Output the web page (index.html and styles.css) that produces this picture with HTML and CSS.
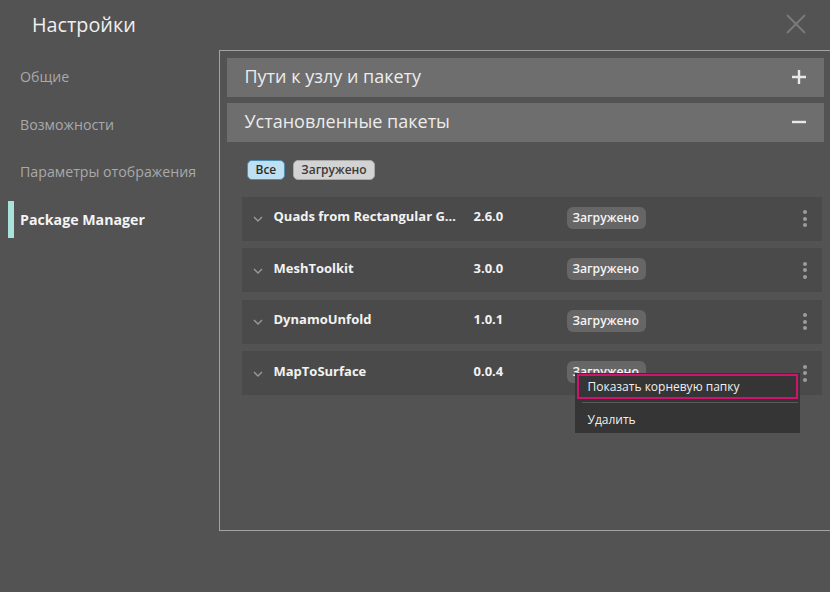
FILE: index.html
```html
<!DOCTYPE html>
<html lang="ru">
<head>
<meta charset="utf-8">
<title>Настройки</title>
<link rel="stylesheet" href="styles.css">
</head>
<body>
<div class="window">
  <header class="topbar">
    <h1 class="title">Настройки</h1>
    <svg class="close" width="20" height="20" viewBox="0 0 20 20"><path d="M1 1 L19 19 M19 1 L1 19" stroke="#7a7a7a" stroke-width="2" fill="none"/></svg>
  </header>
  <div class="body">
    <nav class="sidebar">
      <div class="nav-item">Общие</div>
      <div class="nav-item">Возможности</div>
      <div class="nav-item">Параметры отображения</div>
      <div class="nav-item active">Package Manager</div>
    </nav>
    <main class="panel">
      <div class="acc-header">
        <span>Пути к узлу и пакету</span>
        <svg width="16" height="16" viewBox="0 0 16 16"><path d="M8 1 V15 M1 8 H15" stroke="#e8e8e8" stroke-width="2.4"/></svg>
      </div>
      <div class="acc-header">
        <span>Установленные пакеты</span>
        <svg width="16" height="16" viewBox="0 0 16 16"><path d="M1 8 H15" stroke="#e8e8e8" stroke-width="2.4"/></svg>
      </div>
      <div class="chips">
        <span class="chip chip-active">Все</span>
        <span class="chip">Загружено</span>
      </div>
      <div class="list">
        <div class="row">
          <svg class="chev" width="10" height="6" viewBox="0 0 10 6"><path d="M1 1 L5 5 L9 1" stroke="#9a9a9a" stroke-width="1.4" fill="none"/></svg>
          <span class="name">Quads from Rectangular Grid</span>
          <span class="ver">2.6.0</span>
          <span class="badge">Загружено</span>
          <span class="kebab"><i></i><i></i><i></i></span>
        </div>
        <div class="row">
          <svg class="chev" width="10" height="6" viewBox="0 0 10 6"><path d="M1 1 L5 5 L9 1" stroke="#9a9a9a" stroke-width="1.4" fill="none"/></svg>
          <span class="name">MeshToolkit</span>
          <span class="ver">3.0.0</span>
          <span class="badge">Загружено</span>
          <span class="kebab"><i></i><i></i><i></i></span>
        </div>
        <div class="row">
          <svg class="chev" width="10" height="6" viewBox="0 0 10 6"><path d="M1 1 L5 5 L9 1" stroke="#9a9a9a" stroke-width="1.4" fill="none"/></svg>
          <span class="name">DynamoUnfold</span>
          <span class="ver">1.0.1</span>
          <span class="badge">Загружено</span>
          <span class="kebab"><i></i><i></i><i></i></span>
        </div>
        <div class="row">
          <svg class="chev" width="10" height="6" viewBox="0 0 10 6"><path d="M1 1 L5 5 L9 1" stroke="#9a9a9a" stroke-width="1.4" fill="none"/></svg>
          <span class="name">MapToSurface</span>
          <span class="ver">0.0.4</span>
          <span class="badge">Загружено</span>
          <span class="kebab"><i></i><i></i><i></i></span>
          <div class="menu">
            <div class="menu-item selected">Показать корневую папку</div>
            <div class="menu-sep"></div>
            <div class="menu-item">Удалить</div>
          </div>
        </div>
      </div>
    </main>
  </div>
</div>
</body>
</html>
```
FILE: styles.css
```css
* { box-sizing: border-box; }
html, body {
  margin: 0;
  padding: 0;
  background: #535353;
  font-family: "Open Sans", "Noto Sans", "Liberation Sans", sans-serif;
  overflow: hidden;
}
.window {
  width: 830px;
  height: 592px;
}
.topbar {
  height: 50px;
  display: flex;
  align-items: flex-start;
  justify-content: space-between;
}
.title {
  margin: 12px 0 0 32px;
  font-size: 19.8px;
  font-weight: 400;
  color: #f0f0f0;
  line-height: 26px;
}
.close {
  margin: 14px 24px 0 0;
}
.body {
  display: flex;
}
.sidebar {
  width: 219px;
  flex: none;
  padding-top: 3px;
}
.nav-item {
  height: 47.6px;
  display: flex;
  align-items: center;
  font-size: 14.2px;
  color: #a9a9a9;
  margin-left: 8px;
  padding-left: 12px;
  white-space: nowrap;
  position: relative;
}
.nav-item.active {
  color: #f4f4f4;
  font-weight: 700;
}
.nav-item.active::before {
  content: "";
  position: absolute;
  left: 0;
  top: 5px;
  bottom: 5px;
  width: 6px;
  background: #a9e1db;
}
.panel {
  width: 620px;
  height: 481px;
  border-top: 1.5px solid #a3a3a3;
  border-left: 1.5px solid #a3a3a3;
  border-bottom: 1.5px solid #a3a3a3;
  padding: 6.5px 0 0 6.5px;
  position: relative;
}
.acc-header {
  width: 597px;
  height: 39px;
  background: #6e6e6e;
  margin-bottom: 6px;
  display: flex;
  align-items: center;
  justify-content: space-between;
  padding: 0 17px 0 18px;
  font-size: 18px;
  color: #ececec;
}
.acc-header span {
  margin-top: -2px;
}
.chips {
  display: flex;
  gap: 8px;
  margin: 18px 0 0 20px;
}
.chip {
  height: 20px;
  line-height: 17px;
  padding: 0 7px;
  border-radius: 5px;
  font-size: 12px;
  font-weight: 600;
  color: #3a3a3a;
  background: #d3d3d3;
  border: 1.5px solid #a9a9a9;
}
.chip-active {
  background: #bfe0f2;
  border-color: #4f8fb6;
  color: #2b2b2b;
  padding: 0 8px;
}
.list {
  margin: 17px 0 0 15px;
  width: 580px;
  display: flex;
  flex-direction: column;
  gap: 7.5px;
}
.row {
  height: 44px;
  background: #4a4a4a;
  display: flex;
  align-items: center;
  padding: 0 0 2px 11px;
  position: relative;
}
.chev {
  flex: none;
  margin-top: 3px;
}
.name {
  width: 211px;
  padding-left: 11px;
  padding-right: 14px;
  font-size: 13px;
  font-weight: 700;
  color: #f2f2f2;
  white-space: nowrap;
  overflow: hidden;
  text-overflow: ellipsis;
  flex: none;
  margin-top: -3px;
}
.ver {
  width: 93px;
  font-size: 13px;
  font-weight: 700;
  color: #f2f2f2;
  flex: none;
  margin-top: -3px;
}
.badge {
  height: 22px;
  line-height: 22px;
  padding: 0 7px 0 6px;
  background: #666666;
  border-radius: 6px;
  font-size: 12.2px;
  font-weight: 600;
  color: #f4f4f4;
  flex: none;
}
.kebab {
  margin-left: auto;
  margin-right: 15px;
  display: flex;
  flex-direction: column;
  gap: 2.5px;
  margin-top: 2px;
}
.kebab i {
  display: block;
  width: 4px;
  height: 4px;
  border-radius: 50%;
  background: #9c9c9c;
}
.menu {
  position: absolute;
  left: 333px;
  top: 22px;
  width: 225px;
  height: 60px;
  background: #353535;
  padding: 1px 2px 0 2px;
  z-index: 5;
}
.menu-item {
  height: 25px;
  display: flex;
  align-items: center;
  padding-left: 11px;
  font-size: 12px;
  color: #f0f0f0;
}
.menu-item.selected {
  border: 2px solid #d1126f;
  padding-left: 9px;
}
.menu-sep {
  height: 1px;
  background: #5a5a5a;
  margin: 3px 0 3px 5px;
}
.menu-item:last-child {
  height: 26px;
}
```
